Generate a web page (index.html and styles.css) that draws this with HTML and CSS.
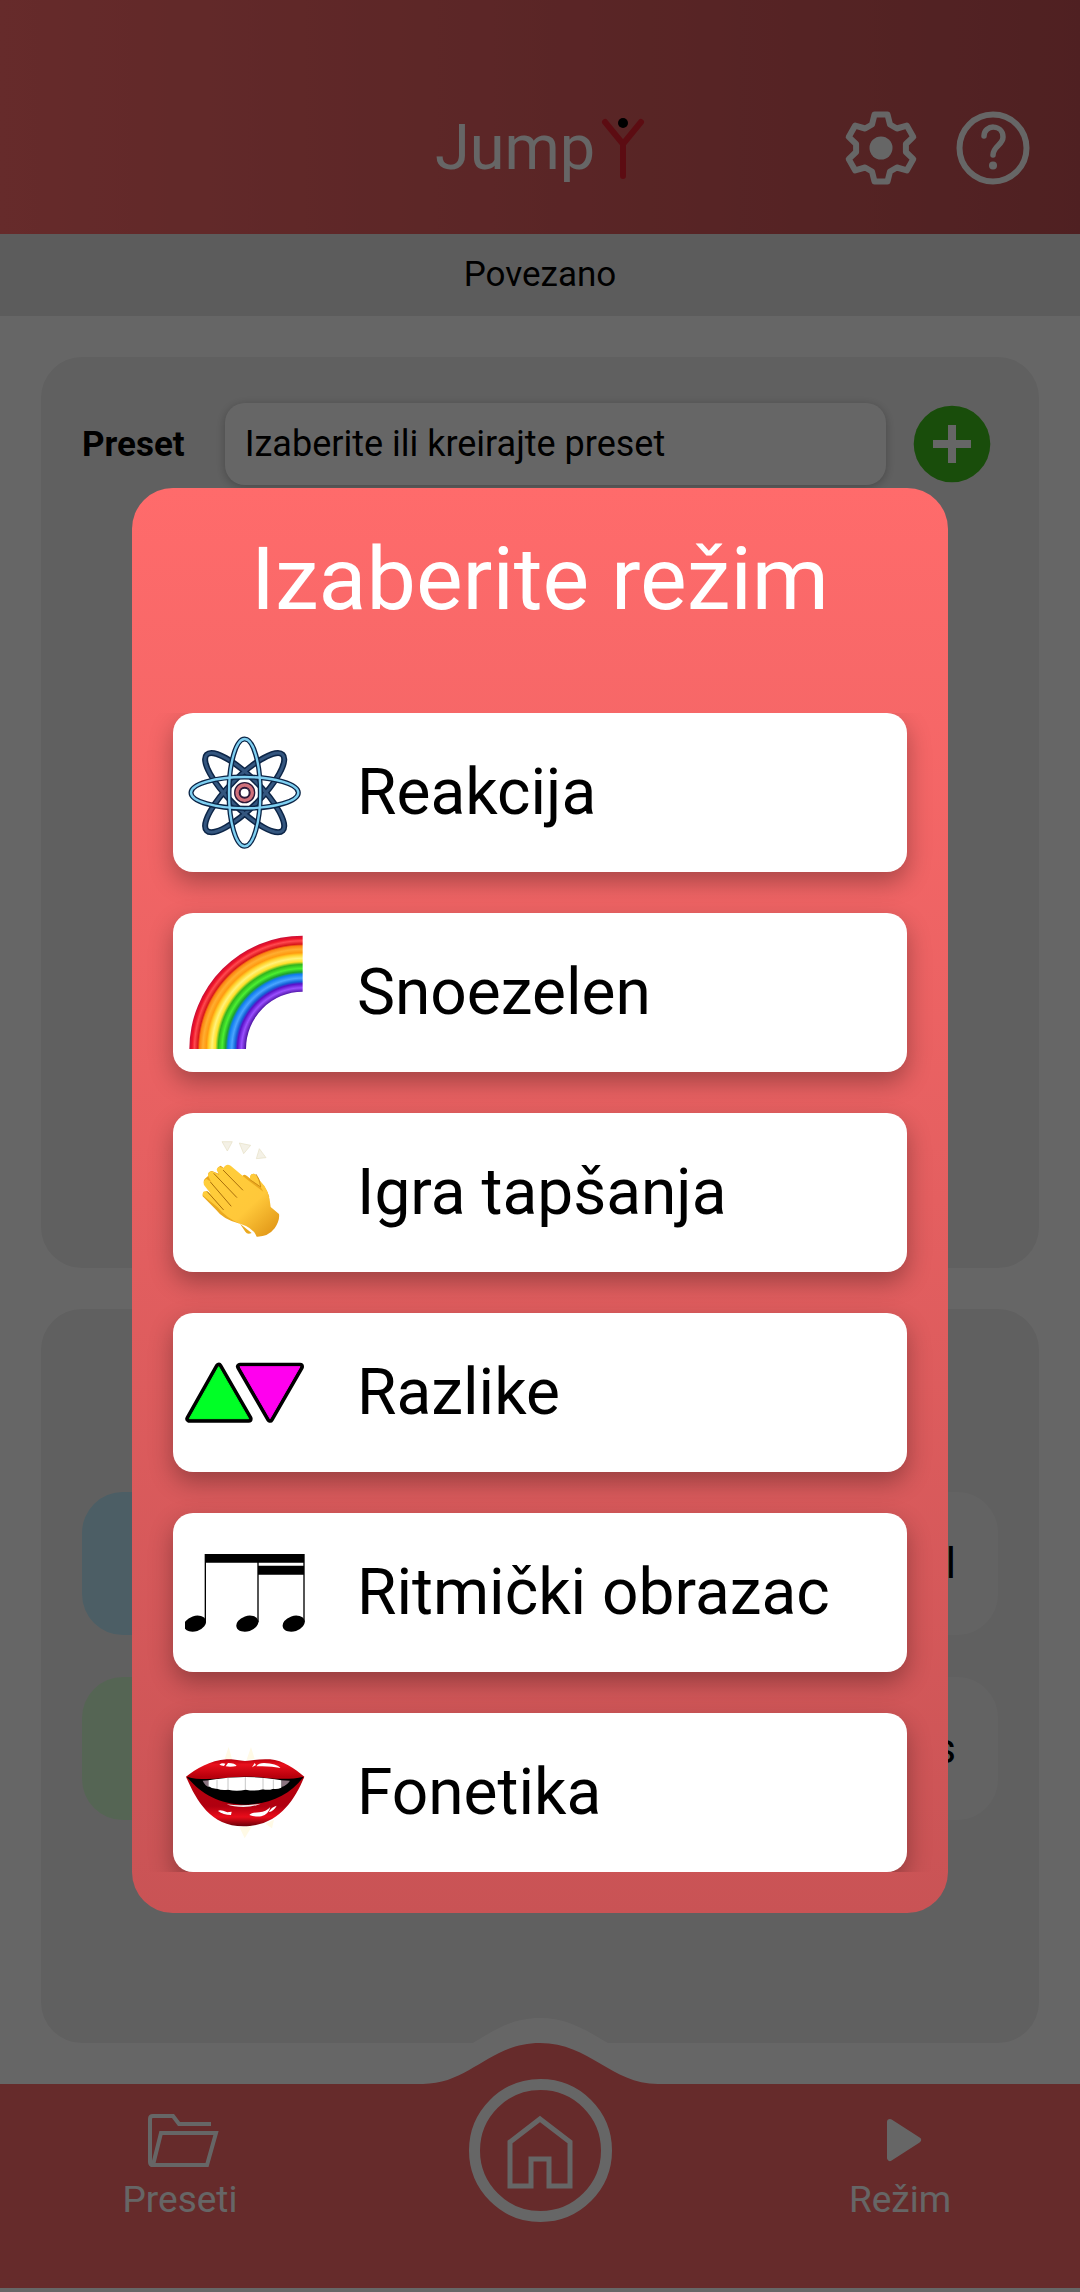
FILE: index.html
```html
<!DOCTYPE html>
<html lang="sr-Latn">
<head>
<meta charset="utf-8">
<meta name="viewport" content="width=device-width, initial-scale=1">
<title>JumpY</title>
<link rel="stylesheet" href="styles.css">
</head>
<body>
<div class="app">
  <header class="topbar">
    <div class="logo">
      <span class="logo-text">Jump</span>
      <svg class="logo-mark" viewBox="0 0 44 64" aria-hidden="true">
        <path d="M4 6 L22 28 L40 6 M22 28 V60" fill="none" stroke="#e6202d" stroke-width="6" stroke-linecap="round" stroke-linejoin="round"/>
        <circle cx="22" cy="7" r="5" fill="#000"/>
      </svg>
    </div>
    <div class="topbar-actions">
      <button class="icon-button" type="button" aria-label="Podešavanja">
        <svg class="topbar-icon" viewBox="0 0 88 88">
          <path d="M35 20.500L37.500 10.500H50.500L53 20.500L59.900 24.500L69.800 21.600L76.300 32.900L68.900 40V48L76.300 55.100L69.800 66.400L59.900 63.500L53 67.500L50.500 77.500H37.500L35 67.500L28.100 63.500L18.200 66.400L11.700 55.100L19.100 48V40L11.700 32.900L18.200 21.600L28.100 24.500Z" fill="none" stroke="#fff" stroke-width="6" stroke-linejoin="round"/>
          <circle cx="44" cy="44" r="11.500" fill="#fff"/>
        </svg>
      </button>
      <button class="icon-button" type="button" aria-label="Pomoć">
        <svg class="topbar-icon" viewBox="0 0 88 88">
          <circle cx="44" cy="44" r="33.500" fill="none" stroke="#fff" stroke-width="6"/>
          <path d="M35 32C35 20 54 20 54 33C54 41 44 42 44 51" fill="none" stroke="#fff" stroke-width="5.500" stroke-linecap="round"/>
          <circle cx="44" cy="61.500" r="4" fill="#fff"/>
        </svg>
      </button>
    </div>
  </header>
  <p class="status">Povezano</p>

  <main class="content">
    <section class="panel">
      <div class="preset-row">
        <label class="preset-label" for="preset">Preset</label>
        <select class="preset-select" id="preset">
          <option>Izaberite ili kreirajte preset</option>
        </select>
        <button class="icon-button" type="button" aria-label="Dodaj preset">
          <svg class="add-icon" viewBox="0 0 92 92">
            <circle cx="46" cy="46" r="38.300" fill="#3fc01c"/>
            <path d="M46 27V65M27 46H65" stroke="#fff" stroke-width="8"/>
          </svg>
        </button>
      </div>
    </section>
    <section class="panel panel-tiles">
      <button class="tile tile-blue" type="button" aria-label="Plava"></button>
      <button class="tile" type="button">l</button>
      <button class="tile tile-green" type="button" aria-label="Zelena"></button>
      <button class="tile" type="button">s</button>
    </section>
  </main>

  <nav class="bottombar">
    <svg class="bump" viewBox="340 2004 400 80" aria-hidden="true">
      <path d="M423 2059C470 2059 490 2018 540 2018S611 2059 658 2059V2084H423Z" fill="#fff"/>
      <path d="M423 2084C470 2084 490 2043 540 2043S611 2084 658 2084Z" fill="#ff6b6b"/>
    </svg>
    <a class="nav-item" href="#preseti">
      <svg class="nav-icon" viewBox="0 0 84 72" aria-hidden="true">
        <path d="M73 20H41L35 12H15Q12 12 12 15V58Q12 61 15 61M23 29H78L69 61H15Z" fill="none" stroke="#fff" stroke-width="4"/>
      </svg>
      <span>Preseti</span>
    </a>
    <a class="nav-home" href="#pocetna" aria-label="Početna">
      <svg class="home-icon" viewBox="0 0 84 84" aria-hidden="true">
        <path d="M42 10L72 33V77H51V50H33V77H12V33Z" fill="none" stroke="#fff" stroke-width="5"/>
      </svg>
    </a>
    <a class="nav-item" href="#rezim">
      <svg class="nav-icon" viewBox="0 0 84 72" aria-hidden="true">
        <path d="M32 18L60 36L32 54Z" fill="#fff" stroke="#fff" stroke-width="6" stroke-linejoin="round"/>
      </svg>
      <span>Režim</span>
    </a>
  </nav>
</div>

<div class="scrim">
  <div class="dialog" role="dialog" aria-modal="true" aria-labelledby="dialog-title">
    <h1 class="dialog-title" id="dialog-title">Izaberite režim</h1>
    <div class="modes">
      <button class="mode" type="button">
        <svg class="mode-icon" viewBox="75 97 360 360" aria-hidden="true">
          <defs>
            <ellipse id="orbit" cx="254" cy="279" rx="47" ry="161"/>
          </defs>
          <g fill="none" stroke="#0c2547" stroke-width="18">
            <use href="#orbit" transform="rotate(45 254 279)"/>
            <use href="#orbit" transform="rotate(-45 254 279)"/>
          </g>
          <g fill="none" stroke="#34567f" stroke-width="9">
            <use href="#orbit" transform="rotate(45 254 279)"/>
            <use href="#orbit" transform="rotate(-45 254 279)"/>
          </g>
          <g fill="none" stroke="#0c2547" stroke-width="15">
            <use href="#orbit" transform="rotate(90 254 279)"/>
            <use href="#orbit"/>
          </g>
          <g fill="none" stroke="#7fd0f2" stroke-width="7">
            <use href="#orbit" transform="rotate(90 254 279)"/>
            <use href="#orbit"/>
          </g>
          <circle cx="254" cy="279" r="23" fill="#fff" stroke="#2b1838" stroke-width="18"/>
          <circle cx="254" cy="279" r="23" fill="none" stroke="#d0707a" stroke-width="10"/>
          <circle cx="254" cy="279" r="14" fill="#fff" stroke="#2b1838" stroke-width="4"/>
        </svg>
        <span>Reakcija</span>
      </button>
      <button class="mode" type="button">
        <svg class="mode-icon" viewBox="75 697 360 360" aria-hidden="true">
          <defs>
            <radialGradient id="rainbow" gradientUnits="userSpaceOnUse" cx="428" cy="1048" r="340">
              <stop offset=".5" stop-color="#4a12a0"/>
              <stop offset=".54" stop-color="#9a50ff"/>
              <stop offset=".575" stop-color="#5a10c8"/>
              <stop offset=".595" stop-color="#1463d8"/>
              <stop offset=".625" stop-color="#4aa5ff"/>
              <stop offset=".66" stop-color="#0f7cf0"/>
              <stop offset=".68" stop-color="#1fa32c"/>
              <stop offset=".71" stop-color="#4bf030"/>
              <stop offset=".745" stop-color="#2fb51e"/>
              <stop offset=".77" stop-color="#ffdf28"/>
              <stop offset=".8" stop-color="#fff27a"/>
              <stop offset=".83" stop-color="#ffd02a"/>
              <stop offset=".85" stop-color="#ff9a10"/>
              <stop offset=".88" stop-color="#ffae30"/>
              <stop offset=".91" stop-color="#fb8410"/>
              <stop offset=".925" stop-color="#d8161a"/>
              <stop offset=".955" stop-color="#ff4a50"/>
              <stop offset=".975" stop-color="#ee1428"/>
              <stop offset="1" stop-color="#c80e38"/>
            </radialGradient>
          </defs>
          <path d="M88 1048A340 340 0 0 1 428 708V876A170 172 0 0 0 258 1048Z" fill="url(#rainbow)"/>
        </svg>
        <span>Snoezelen</span>
      </button>
      <button class="mode" type="button">
        <svg class="mode-icon" viewBox="75 97 360 360" aria-hidden="true">
          <defs>
            <linearGradient id="hand" x1="0" y1="0" x2="1" y2="1">
              <stop offset="0" stop-color="#ffcf3a"/>
              <stop offset=".6" stop-color="#ffc83a"/>
              <stop offset="1" stop-color="#dc8f12"/>
            </linearGradient>
          </defs>
          <path d="M186 126H217L202 154ZM238 130L272 137L251 162ZM298 147L318 174L289 177Z" fill="#f4f1e6" stroke="#e6dfc4" stroke-width="2"/>
          <path d="M245 232Q252 220 262 230L272 238Q268 222 282 222Q296 232 302 246Q322 270 328 292L270 300ZM128 290Q126 276 138 276L240 372L275 400Q262 406 256 396L240 372Q190 360 168 330Z" fill="#eba91f"/>
          <path d="M145 228Q142 216 156 214L176 222Q166 204 182 198L200 212L180 280L140 262Q126 248 134 238Z" fill="#e9a41c"/>
          <path d="M190 206Q198 190 212 198L262 240L310 276Q304 258 270 240Q268 222 282 222Q292 228 300 244Q328 268 332 322L357 343Q360 362 344 386Q324 412 290 411Q280 384 240 372Q200 356 172 322L130 288Q124 274 140 274L152 282L132 256Q128 242 140 238L154 248L144 228Q144 214 160 216L178 226L170 210Q172 196 190 206Z" fill="url(#hand)"/>
          <g fill="none" stroke="#a96e0a" stroke-width="3" stroke-linecap="round">
            <path d="M190 212L248 271M162 222L230 293M152 248L213 319M142 276L190 330"/>
            <path d="M288 224Q298 236 302 262L270 240" stroke="#cf8e16"/>
          </g>
        </svg>
        <span>Igra tapšanja</span>
      </button>
      <button class="mode" type="button">
        <svg class="mode-icon" viewBox="75 697 360 360" aria-hidden="true">
          <g stroke-linejoin="round">
            <path d="M176 801L88 957H266Z" stroke="#000" stroke-width="24"/>
            <path d="M176 801L88 957H266Z" fill="#00ff26" stroke="#00ff26" stroke-width="3"/>
            <path d="M240 801H420L330 957Z" stroke="#000" stroke-width="24"/>
            <path d="M240 801H420L330 957Z" fill="#ff00ee" stroke="#ff00ee" stroke-width="3"/>
          </g>
        </svg>
        <span>Razlike</span>
      </button>
      <button class="mode" type="button">
        <svg class="mode-icon" viewBox="75 97 360 360" aria-hidden="true">
          <path d="M134 163H434V189H134ZM292 198H434V225H292ZM134 163H138V368H134ZM292 163H296V368H292ZM430 163H434V368H430Z"/>
          <ellipse cx="105" cy="372" rx="34" ry="23" transform="rotate(-18 105 372)"/>
          <ellipse cx="262" cy="372" rx="34" ry="23" transform="rotate(-18 262 372)"/>
          <ellipse cx="401" cy="372" rx="34" ry="23" transform="rotate(-18 401 372)"/>
        </svg>
        <span>Ritmički obrazac</span>
      </button>
      <button class="mode" type="button">
        <svg class="mode-icon" viewBox="75 697 360 360" aria-hidden="true">
          <defs>
            <linearGradient id="lip" x1="0" y1="0" x2="0" y2="1">
              <stop offset="0" stop-color="#b8000c"/>
              <stop offset=".08" stop-color="#e8101c"/>
              <stop offset=".26" stop-color="#b8000c"/>
              <stop offset=".7" stop-color="#b00010"/>
              <stop offset=".86" stop-color="#ea0c1a"/>
              <stop offset="1" stop-color="#6a0008"/>
            </linearGradient>
          </defs>
          <path d="M194 778L206 742L216 778ZM260 780L273 742L284 778ZM238 982L254 1016L276 980ZM316 972L336 986L342 960Z" fill="#fffae6"/>
          <path d="M78 831C108 808 150 782 200 779C225 778 235 783 255 784C275 782 300 777 330 779C370 782 405 808 433 831C405 900 355 980 250 980C150 980 108 900 78 831Z" fill="url(#lip)"/>
          <path d="M80 831C140 848 200 830 255 831C310 830 370 846 431 831C392 885 330 914 255 915C175 914 120 880 80 831Z"/>
          <path d="M128 843L148 842V862Q136 860 128 843ZM364 842L390 843Q380 858 364 862Z" fill="#8a7480"/>
          <path d="M146 842Q200 832 255 832Q310 832 364 842V864Q350 870 340 867Q325 873 309 869Q285 876 257 870Q230 876 204 870Q186 873 171 867Q155 868 146 860Z" fill="#fff"/>
          <path d="M171 840V867M204 835V870M256 832V871M309 835V869M340 839V867" stroke="#aaa" stroke-width="2"/>
          <path d="M200 914Q250 920 302 912Q280 922 250 922Q220 922 200 914Z" fill="#eee"/>
          <path d="M178 795Q186 788 196 792L192 799Q184 798 178 795ZM197 800L204 790Q226 790 230 799Q212 803 197 800ZM276 803L284 790L288 796ZM289 800Q296 790 312 790Q350 792 362 805Q330 798 289 800ZM174 934Q180 928 202 938L215 936L213 946Q190 946 174 934ZM268 946Q275 938 298 938Q318 936 331 922Q326 944 304 950Q284 952 268 946ZM326 938Q334 922 350 918Q342 934 326 938Z" fill="#fff"/>
        </svg>
        <span>Fonetika</span>
      </button>
    </div>
  </div>
</div>
</body>
</html>
```
FILE: styles.css
```css
* {
  box-sizing: border-box;
}

body {
  margin: 0;
  background: #fff;
  color: #000;
  font-family: Roboto, "Noto Sans", sans-serif;
  font-size: 36px;
}

button,
select {
  margin: 0;
  border: 0;
  color: inherit;
  font: inherit;
}

svg {
  display: block;
  flex: none;
}

.app {
  display: flex;
  flex-direction: column;
  min-height: 100vh;
  padding-bottom: 4px;
}

/* Header */

.topbar {
  display: grid;
  grid-template-columns: 1fr auto 1fr;
  align-items: center;
  padding: 104px 43px 42px;
  background: linear-gradient(to right, #ff6b6b, #c65255);
}

.logo {
  display: flex;
  grid-column: 2;
  align-items: center;
  gap: 6px;
  color: #fff;
  font-size: 63px;
  line-height: 88px;
}

.logo-mark {
  width: 44px;
  height: 64px;
}

.topbar-actions {
  display: flex;
  justify-content: flex-end;
  gap: 24px;
}

.icon-button {
  padding: 0;
  background: none;
}

.topbar-icon {
  width: 88px;
  height: 88px;
}

.status {
  margin: 0;
  background: #e6e6e6;
  font-size: 35px;
  line-height: 82px;
  text-align: center;
}

/* Panels */

.content {
  display: grid;
  flex: 1;
  grid-template-rows: 911fr 734fr;
  gap: 41px;
  padding: 41px;
}

.panel {
  padding: 41px;
  border-radius: 41px;
  background: #f0f0f0;
}

.preset-row {
  display: flex;
  align-items: center;
  gap: 20px;
}

.preset-label {
  margin-right: 20px;
  font-size: 35px;
  font-weight: 700;
}

.preset-select {
  flex: 1;
  min-width: 0;
  height: 82px;
  padding: 0 20px;
  border-radius: 20px;
  background: #fff;
  box-shadow: 0 2px 10px rgba(0, 0, 0, .25);
  appearance: none;
}

.add-icon {
  width: 92px;
  height: 92px;
}

.panel-tiles {
  display: grid;
  grid-template-columns: 1fr 1fr;
  align-content: start;
  gap: 42px;
  padding-top: 183px;
}

.tile {
  height: 143px;
  padding: 0 42px;
  border-radius: 41px;
  background: #f8f8f8;
  font-size: 42px;
  text-align: right;
}

.tile-blue {
  background: #bdebfc;
}

.tile-green {
  background: #d4fcd2;
}

/* Bottom navigation */

.bottombar {
  position: relative;
  display: grid;
  grid-template-columns: 1fr 1fr 1fr;
  align-items: start;
  justify-items: center;
  height: 204px;
  background: #ff6b6b;
}

.bump {
  position: absolute;
  bottom: 100%;
  left: 50%;
  width: 400px;
  height: 80px;
  margin-left: -200px;
}

.nav-item {
  display: flex;
  flex-direction: column;
  align-items: center;
  padding-top: 20px;
  color: #fff;
  font-size: 37px;
  line-height: 48px;
  text-decoration: none;
}

.nav-icon {
  width: 84px;
  height: 72px;
}

.nav-home {
  position: relative;
  display: grid;
  place-items: center;
  width: 143px;
  height: 143px;
  margin-top: -5px;
  border: 11px solid #fff;
  border-radius: 50%;
}

.home-icon {
  width: 84px;
  height: 84px;
}

/* Mode picker */

.scrim {
  position: fixed;
  inset: 0;
  display: flex;
  align-items: center;
  justify-content: center;
  padding: 108px 132px 0;
  background: rgba(0, 0, 0, .6);
}

.dialog {
  flex: 1;
  max-width: 816px;
  padding: 41px 0;
  overflow: hidden;
  border-radius: 41px;
  background: linear-gradient(#ff6b6b, #c95355);
}

.dialog-title {
  margin: 0 0 84px;
  color: #fff;
  font-size: 88px;
  font-weight: 400;
  line-height: 100px;
  text-align: center;
}

.modes {
  display: flex;
  flex-direction: column;
  gap: 41px;
  padding: 0 41px;
  overflow: hidden;
}

.mode {
  display: flex;
  align-items: center;
  gap: 52px;
  height: 159px;
  padding: 0 12px;
  border-radius: 20px;
  background: #fff;
  box-shadow: 0 10px 24px rgba(0, 0, 0, .3);
  font-size: 64px;
  text-align: left;
}

.mode-icon {
  width: 120px;
  height: 120px;
}
```
